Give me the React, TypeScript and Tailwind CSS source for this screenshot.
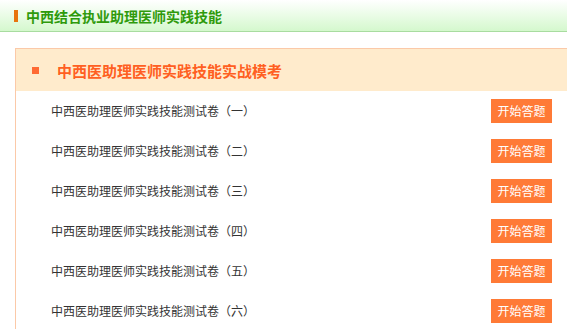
const papers = ["一", "二", "三", "四", "五", "六"]

const App = () => {
  return (
    <div
      className="w-[567px] h-[329px] overflow-hidden bg-white"
      style={{ fontFamily: '"Noto Sans CJK SC", "Liberation Sans", sans-serif' }}
    >
      <div className="h-[32px] flex items-center border-b border-[#a8dca0] bg-gradient-to-b from-white to-[#d4f8cd]">
        <span className="ml-[14px] w-[4px] h-[12px] bg-[#e8740e]" />
        <h3 className="ml-[8px] text-[14px] leading-none font-bold text-[#2f9a0c]">中西结合执业助理医师实践技能</h3>
      </div>

      <div className="mt-[16px] ml-[15px] border-l border-t border-[#fbc9a8]">
        <div className="h-[42px] flex items-center bg-[#ffebcc]">
          <span className="ml-[16px] w-[7px] h-[7px] bg-[#ff6a33]" />
          <h4 className="ml-[18px] text-[15px] leading-none font-bold text-[#ff5f22]">中西医助理医师实践技能实战模考</h4>
        </div>
        {papers.map((n) => (
          <div key={n} className="h-[40px] flex items-center justify-between pl-[35px] pr-[15px]">
            <span className="text-[12px] text-[#333333]">中西医助理医师实践技能测试卷（{n}）</span>
            <button className="w-[61px] h-[24px] bg-[#ff7a36] text-white text-[12px] leading-none">开始答题</button>
          </div>
        ))}
      </div>
    </div>
  )
}

export default App
